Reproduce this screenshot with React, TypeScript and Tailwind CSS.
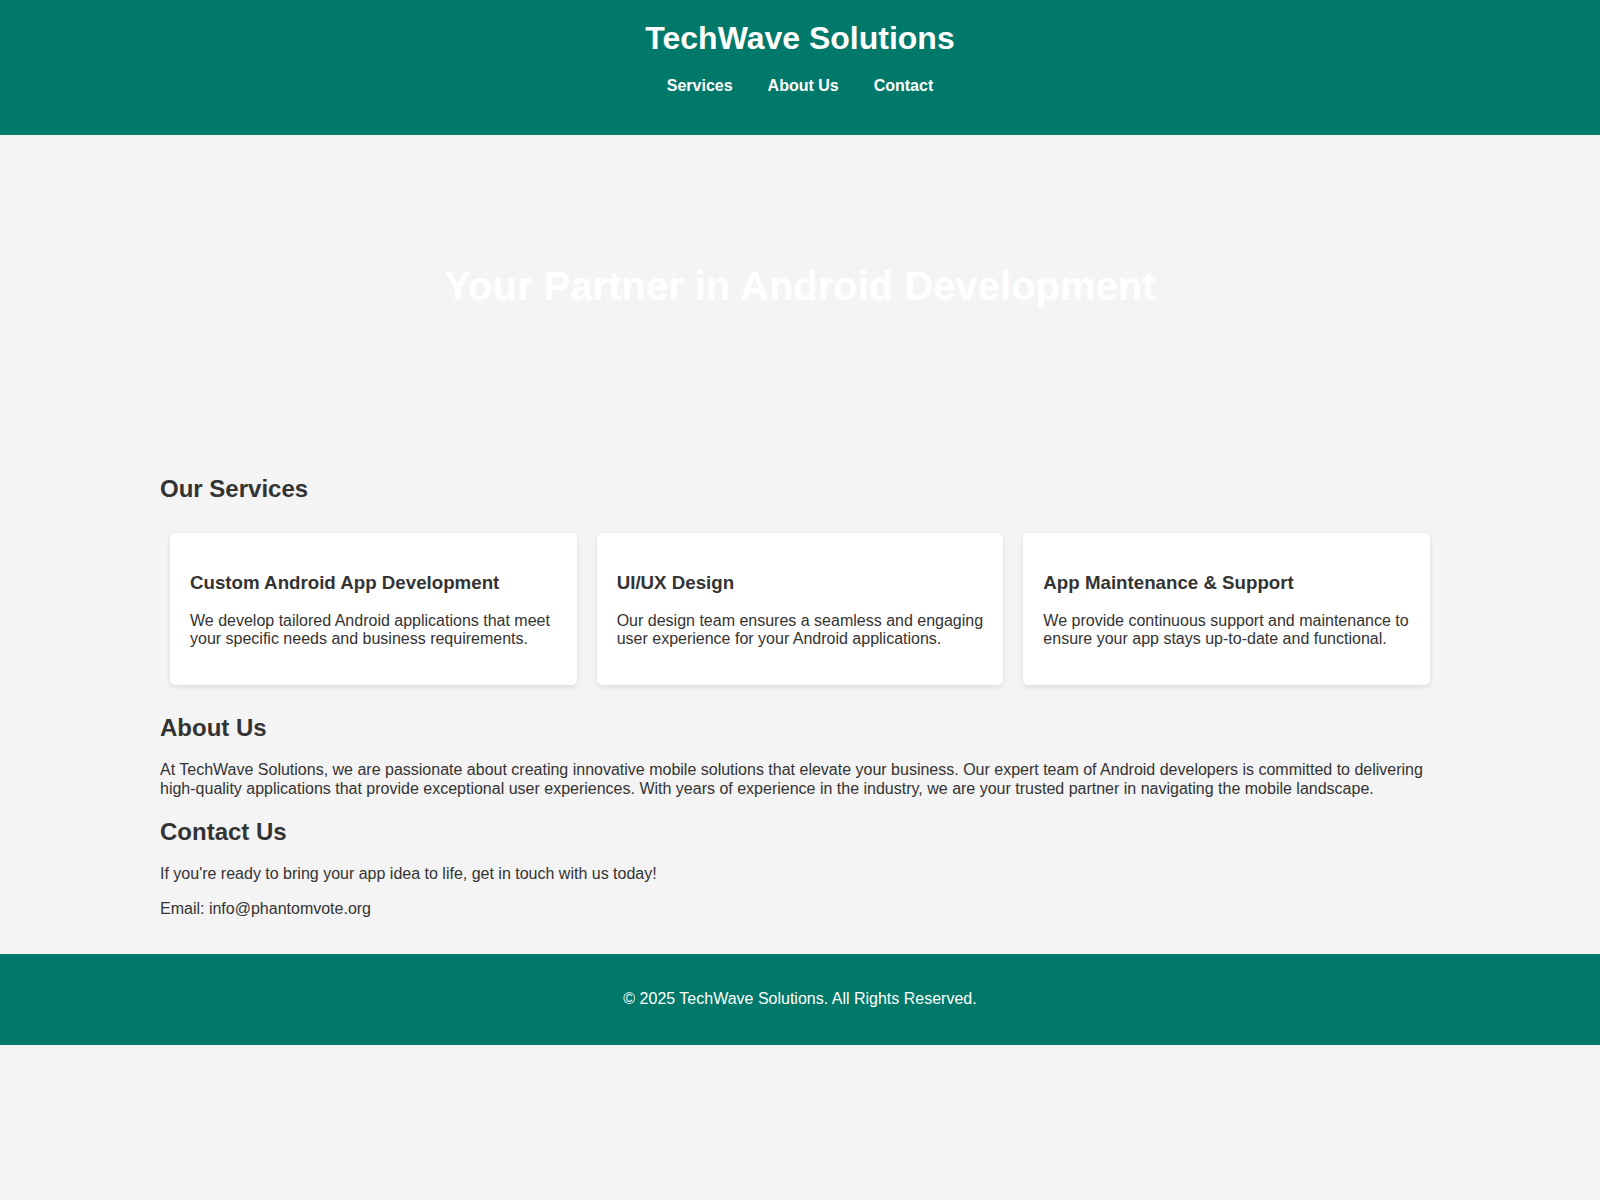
import React from "react";

type Service = {
  title: string;
  description: string;
};

const services: Service[] = [
  {
    title: "Custom Android App Development",
    description:
      "We develop tailored Android applications that meet your specific needs and business requirements.",
  },
  {
    title: "UI/UX Design",
    description:
      "Our design team ensures a seamless and engaging user experience for your Android applications.",
  },
  {
    title: "App Maintenance & Support",
    description:
      "We provide continuous support and maintenance to ensure your app stays up-to-date and functional.",
  },
];

const ServiceCard = ({ title, description }: Service) => {
  return (
    <div className="flex-1 m-[10px] bg-white rounded-[5px] shadow-[0_2px_5px_rgba(0,0,0,0.1)] p-[20px]">
      <h3 className="text-[18.72px] font-bold leading-[1.15] my-[18.72px]">{title}</h3>
      <p className="text-[16px] leading-[1.15] mb-[16px]">{description}</p>
    </div>
  );
};

const App = () => {
  return (
    <div className="min-h-screen bg-[#f4f4f4] text-[#333] font-['Liberation_Sans',Arial,sans-serif]">
      <header className="bg-[#00796b] text-white text-center pt-[20px] pb-[40px]">
        <h1 className="text-[32px] font-bold leading-[1.15]">TechWave Solutions</h1>
        <nav className="mt-[20px]">
          <ul className="flex justify-center gap-[35px] text-[16px] font-bold leading-[1.15]">
            <li>
              <a href="#services">Services</a>
            </li>
            <li>
              <a href="#about">About Us</a>
            </li>
            <li>
              <a href="#contact">Contact</a>
            </li>
          </ul>
        </nav>
      </header>

      {/* hero banner */}
      <section className="h-[300px] flex items-center justify-center pt-[2px]">
        <h2 className="text-[40px] font-bold leading-[1.15] text-white">
          Your Partner in Android Development
        </h2>
      </section>

      <main className="w-[1280px] mx-auto pt-[20px] pb-[20px]">
        <section id="services">
          <h2 className="text-[24px] font-bold leading-[1.15] my-[20px]">Our Services</h2>
          <div className="flex">
            {services.map((s) => (
              <ServiceCard key={s.title} {...s} />
            ))}
          </div>
        </section>

        <section id="about">
          <h2 className="text-[24px] font-bold leading-[1.15] mt-[19px] mb-[20px]">About Us</h2>
          <p className="text-[16px] leading-[1.15]">
            At TechWave Solutions, we are passionate about creating innovative mobile solutions that
            elevate your business. Our expert team of Android developers is committed to delivering
            high-quality applications that provide exceptional user experiences. With years of
            experience in the industry, we are your trusted partner in navigating the mobile
            landscape.
          </p>
        </section>

        <section id="contact">
          <h2 className="text-[24px] font-bold leading-[1.15] my-[20px]">Contact Us</h2>
          <p className="text-[16px] leading-[1.15]">
            If you're ready to bring your app idea to life, get in touch with us today!
          </p>
          <p className="text-[16px] leading-[1.15] mt-[16px] mb-[16px]">
            Email: info@phantomvote.org
          </p>
        </section>
      </main>

      <footer className="bg-[#00796b] text-white text-center py-[20px]">
        <p className="text-[16px] leading-[1.15] my-[16px]">
          © 2025 TechWave Solutions. All Rights Reserved.
        </p>
      </footer>
    </div>
  );
};

export default App;
